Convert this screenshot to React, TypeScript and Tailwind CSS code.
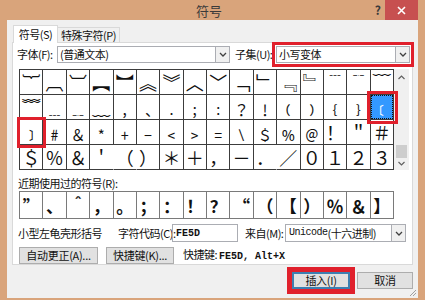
import React from "react";

const cjk = { fontFamily: '"Noto Sans CJK SC", "Liberation Sans", sans-serif' };
const mono = { fontFamily: '"Liberation Mono", monospace' };

const rows: string[][] = [
  ["︸", "︹", "︺", "︻", "︼", "︽", "︾", "︿", "﹀", "﹁", "﹂", "﹃", "﹄", "﹉", "﹊", "﹋"],
  ["﹌", "﹍", "﹎", "﹏", "﹐", "﹑", "﹒", "﹔", "﹕", "﹖", "﹗", "﹙", "﹚", "﹛", "﹜", "﹝"],
  ["﹞", "﹟", "﹠", "﹡", "﹢", "﹣", "﹤", "﹥", "﹦", "﹨", "﹩", "﹪", "﹫", "！", "＂", "＃"],
  ["＄", "％", "＆", "＇", "（", "）", "＊", "＋", "，", "－", "．", "／", "０", "１", "２", "３"],
];

const recent = ["”", "、", "＾", "，", "。", "；", "：", "！", "？", "“", "（", "【", "）", "％", "＆", "】"];

const noRight = new Set(["3-3", "3-4", "3-10"]);

const Arrow = () => (
  <div className="w-[14px] h-full flex items-center justify-center bg-[#f0f0f0] border-l border-[#abadb3]">
    <svg width="8" height="5" viewBox="0 0 8 5">
      <path d="M1 1 L4 4 L7 1" stroke="#404040" strokeWidth="1.3" fill="none" />
    </svg>
  </div>
);

const Btn = ({ label, w, primary }: { label: string; w: string; primary?: boolean }) => (
  <div
    className={`${w} h-[17px] flex items-center justify-center whitespace-nowrap text-[11px] tracking-[-0.3px] leading-none text-[#111] bg-[#e1e1e1] border ${
      primary ? "border-[#3c7fb1] shadow-[inset_0_0_0_1px_#3c7fb1]" : "border-[#adadad]"
    }`}
  >
    {label}
  </div>
);

export default function App() {
  return (
    <div className="w-[425px] h-[300px] bg-[#d9a47b] flex flex-col overflow-hidden" style={cjk}>
      {/* title bar */}
      <div className="h-[22px] flex items-start">
        <div className="flex-1" />
        <div className="pt-[3px] text-[13px] leading-[16px] text-[#3a3a3a]">符号</div>
        <div className="flex-1 flex justify-end pr-[7px]">
          <div className="pt-[3px] pr-[4px] text-[12px] font-bold leading-[14px] text-[#3a3a3a]">?</div>
          <div className="w-[33px] h-[20px] bg-[#c75050] flex items-center justify-center">
            <svg width="9" height="9" viewBox="0 0 9 9">
              <path d="M1 1 L8 8 M8 1 L1 8" stroke="#fff" strokeWidth="1.6" />
            </svg>
          </div>
        </div>
      </div>

      {/* dialog body */}
      <div className="flex-1 mx-[7px] mb-[7px] bg-[#f0f0f0] flex flex-col text-[11px] tracking-[-0.5px] text-[#111] whitespace-nowrap">
        {/* tabs */}
        <div className="flex items-end pt-[4px] pl-[6px] h-[22px]">
          <div className="relative z-10 -mb-px h-[18px] w-[45px] bg-white border border-b-0 border-[#d9d9d9] flex items-center justify-center leading-none">
            符号(S)
          </div>
          <div className="h-[15px] w-[62px] bg-[#f0f0f0] border border-l-0 border-b-0 border-[#d9d9d9] flex items-center justify-center leading-none">
            特殊字符(P)
          </div>
        </div>

        {/* tab panel */}
        <div className="ml-[5px] w-[401px] h-[223px] bg-white border border-[#d9d9d9] flex flex-col">
          {/* font / subset row */}
          <div className="mt-[3px] h-[17px] flex items-center pl-[4px]">
            <div className="w-[40px] shrink-0 leading-none">字体(F):</div>
            <div className="w-[173px] shrink-0 h-full border border-[#abadb3] flex">
              <div className="flex-1 pl-[2px] leading-[15px]">(普通文本)</div>
              <Arrow />
            </div>
            <div className="ml-[5px] w-[41px] shrink-0 leading-none">子集(U):</div>
            <div className="w-[134px] shrink-0 h-full border border-[#abadb3] flex outline-[3px] outline-solid outline-offset-[1px] outline-[#e0202c]">
              <div className="flex-1 pl-[2px] leading-[15px]">小写变体</div>
              <Arrow />
            </div>
          </div>

          {/* symbol grid */}
          <div className="mt-[6px] ml-[6px] flex tracking-normal">
            <div className="w-[375px] grid grid-cols-[repeat(16,minmax(0,1fr))] border-l border-t border-[#3c3c3c]">
              {rows.map((row, r) =>
                row.map((ch, c) => {
                  const sel = r === 1 && c === 15;
                  const boxed = r === 2 && c === 0;
                  const hideR = noRight.has(`${r}-${c}`);
                  return (
                    <div
                      key={`${r}-${c}`}
                      className={`h-[25px] border-b border-[#3c3c3c] flex items-center justify-center text-[18px] leading-none ${
                        hideR ? "border-r border-r-white" : "border-r"
                      } ${sel ? "relative z-10 bg-[#3399ff] text-white outline-[3px] outline-solid outline-offset-[1px] outline-[#e0202c]" : "text-[#111]"} ${
                        boxed ? "relative z-10 outline-[3px] outline-solid outline-offset-[0px] outline-[#e0202c]" : ""
                      }`}
                    >
                      {sel ? (
                        <div className="w-full h-full border border-dotted border-[#111] flex items-center justify-center">{ch}</div>
                      ) : (
                        ch
                      )}
                    </div>
                  );
                })
              )}
            </div>
            {/* scrollbar */}
            <div className="w-[15px] h-[101px] bg-[#f0f0f0] flex flex-col items-center">
              <svg width="9" height="14" viewBox="0 0 9 14" className="mt-[1px]">
                <path d="M1.5 9 L4.5 6 L7.5 9" stroke="#606060" strokeWidth="1.2" fill="none" />
              </svg>
              <div className="flex-1" />
              <div className="w-[11px] h-[13px] bg-[#cdcdcd]" />
              <svg width="9" height="12" viewBox="0 0 9 12">
                <path d="M1.5 4 L4.5 7 L7.5 4" stroke="#606060" strokeWidth="1.2" fill="none" />
              </svg>
            </div>
          </div>

          {/* recently used */}
          <div className="mt-[6px] ml-[5px] leading-[14px]">近期使用过的符号(R):</div>
          <div className="mt-[1px] ml-[6px] w-[375px] grid grid-cols-[repeat(16,minmax(0,1fr))] border border-r-0 border-[#7a7a7a] tracking-normal">
            {recent.map((ch, i) => (
              <div
                key={i}
                className="h-[26px] border-r border-[#7a7a7a] flex items-center justify-center text-[17px] leading-none text-[#111] font-bold"
              >
                {ch}
              </div>
            ))}
          </div>

          {/* info row */}
          <div className="mt-[5px] h-[18px] flex items-center pl-[5px]">
            <div className="w-[100px] shrink-0 leading-none">小型左龟壳形括号</div>
            <div className="w-[54px] shrink-0 leading-none">字符代码(C):</div>
            <div className="w-[66px] shrink-0 h-full border border-[#abadb3] pl-[3px] flex items-center text-[10px] font-bold tracking-normal" style={mono}>
              FE5D
            </div>
            <div className="ml-[7px] w-[40px] shrink-0 leading-none">来自(M):</div>
            <div className="w-[121px] shrink-0 h-full border border-[#abadb3] flex">
              <div className="flex-1 pl-[3px] flex items-center leading-none">
                <span className="text-[10px]" style={mono}>
                  Unicode
                </span>
                (十六进制)
              </div>
              <Arrow />
            </div>
          </div>

          {/* autocorrect row */}
          <div className="mt-[5px] flex items-center pl-[6px]">
            <Btn label="自动更正(A)..." w="w-[79px]" />
            <div className="ml-[8px]">
              <Btn label="快捷键(K)..." w="w-[68px]" />
            </div>
            <div className="ml-[9px] leading-none">
              快捷键:{" "}
              <span className="text-[10px] font-bold tracking-normal" style={mono}>
                FE5D, Alt+X
              </span>
            </div>
          </div>
        </div>

        {/* bottom buttons */}
        <div className="mt-[7px] flex justify-end pr-[5px] gap-[7px] items-center">
          <div className="outline-[5px] outline-solid outline-offset-[0px] outline-[#e0202c]">
            <Btn label="插入(I)" w="w-[58px]" primary />
          </div>
          <Btn label="取消" w="w-[56px]" />
        </div>
        <div className="flex-1 flex justify-end items-end pr-[1px] pb-[1px]">
          <svg width="8" height="8" viewBox="0 0 8 8">
            <path d="M7 1 L1 7 M7 4 L4 7" stroke="#a0a0a0" strokeWidth="1" />
          </svg>
        </div>
      </div>
    </div>
  );
}
